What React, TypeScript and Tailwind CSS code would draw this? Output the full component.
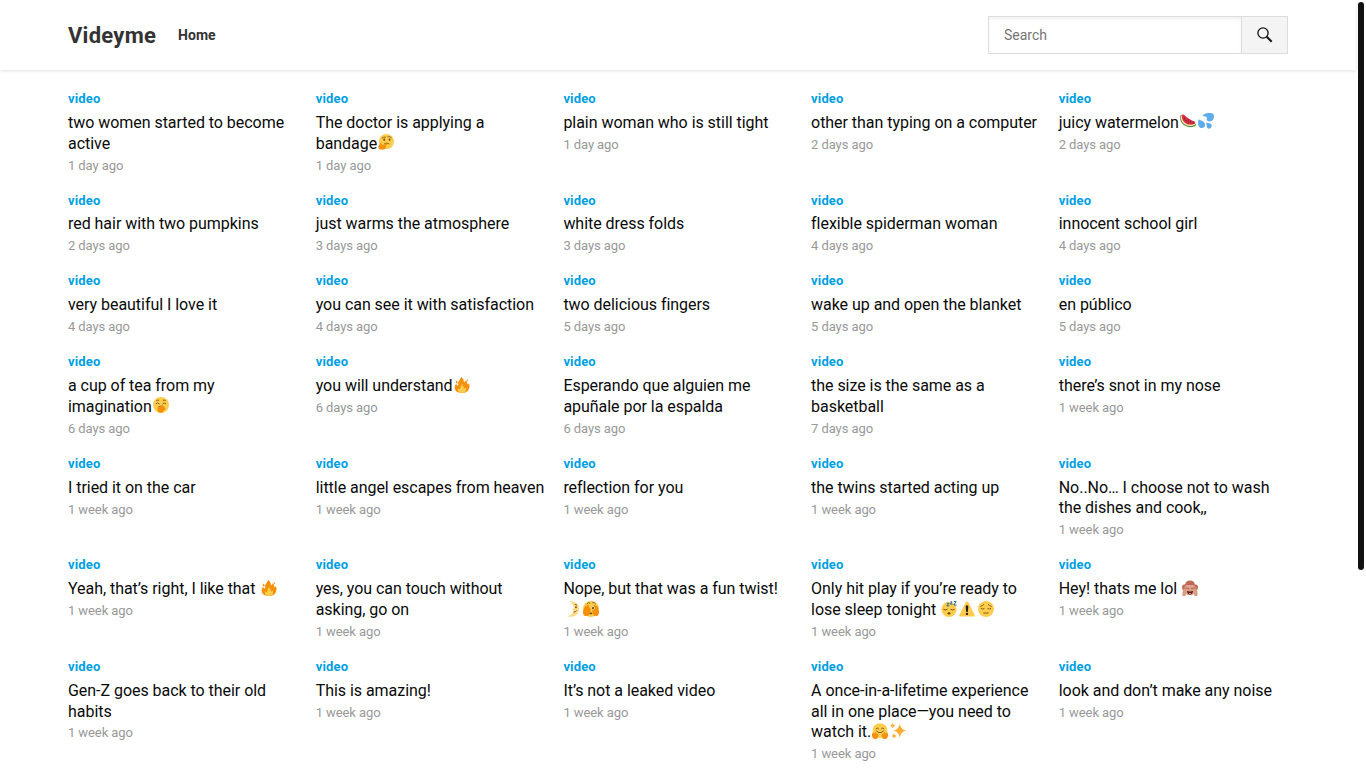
import type { ReactNode } from "react";

interface Post {
  title: string;
  age: string;
}

const rows: Post[][] = [
  [
    { title: "two women started to become active", age: "1 day ago" },
    { title: "The doctor is applying a bandage🤔", age: "1 day ago" },
    { title: "plain woman who is still tight", age: "1 day ago" },
    { title: "other than typing on a computer", age: "2 days ago" },
    { title: "juicy watermelon🍉💦", age: "2 days ago" },
  ],
  [
    { title: "red hair with two pumpkins", age: "2 days ago" },
    { title: "just warms the atmosphere", age: "3 days ago" },
    { title: "white dress folds", age: "3 days ago" },
    { title: "flexible spiderman woman", age: "4 days ago" },
    { title: "innocent school girl", age: "4 days ago" },
  ],
  [
    { title: "very beautiful I love it", age: "4 days ago" },
    { title: "you can see it with satisfaction", age: "4 days ago" },
    { title: "two delicious fingers", age: "5 days ago" },
    { title: "wake up and open the blanket", age: "5 days ago" },
    { title: "en público", age: "5 days ago" },
  ],
  [
    { title: "a cup of tea from my imagination🤭", age: "6 days ago" },
    { title: "you will understand🔥", age: "6 days ago" },
    { title: "Esperando que alguien me apuñale por la espalda", age: "6 days ago" },
    { title: "the size is the same as a basketball", age: "7 days ago" },
    { title: "there’s snot in my nose", age: "1 week ago" },
  ],
  [
    { title: "I tried it on the car", age: "1 week ago" },
    { title: "little angel escapes from heaven", age: "1 week ago" },
    { title: "reflection for you", age: "1 week ago" },
    { title: "the twins started acting up", age: "1 week ago" },
    { title: "No..No… I choose not to wash the dishes and cook,,", age: "1 week ago" },
  ],
  [
    { title: "Yeah, that’s right, I like that 🔥", age: "1 week ago" },
    { title: "yes, you can touch without asking, go on", age: "1 week ago" },
    { title: "Nope, but that was a fun twist! 🌛🫣", age: "1 week ago" },
    { title: "Only hit play if you’re ready to lose sleep tonight 😴⚠😔", age: "1 week ago" },
    { title: "Hey! thats me lol 🙈", age: "1 week ago" },
  ],
  [
    { title: "Gen-Z goes back to their old habits", age: "1 week ago" },
    { title: "This is amazing!", age: "1 week ago" },
    { title: "It’s not a leaked video", age: "1 week ago" },
    { title: "A once-in-a-lifetime experience all in one place—you need to watch it.🤗✨", age: "1 week ago" },
    { title: "look and don’t make any noise", age: "1 week ago" },
  ],
];

const face = <circle cx="18" cy="18" r="18" fill="#ffcc4d" />;

// Flat emoji drawings on a 36x36 grid
const emojis: Record<string, ReactNode> = {
  "🤔": (
    <>
      <circle cx="19" cy="17" r="17" fill="#ffcc4d" />
      <ellipse cx="14" cy="13" rx="2" ry="2.6" fill="#664500" />
      <ellipse cx="26" cy="13" rx="2" ry="2.6" fill="#664500" />
      <path d="M9 9q4-3 8-2M22 6q5-1 8 2M15 21q5-2 10 1" fill="none" stroke="#664500" strokeWidth="1.6" strokeLinecap="round" />
      <path d="M4 22q2-3 4 0v4l9-4q4-1 4 2l-5 2q4 0 2 4l-3 4q-3 2-9 1-6-1-5-7z" fill="#f4900c" />
    </>
  ),
  "🍉": (
    <>
      <path d="M1 5C-4 24 16 38 35 29l1-4L4 4z" fill="#5c913b" />
      <path d="M2 6C0 23 17 34 33 27l1-2L5 5z" fill="#ffe8b6" />
      <path d="M4 5C3 21 18 31 33 24q3-2 0-5Q21 16 9 4 5 2 4 5z" fill="#dd2e44" />
      <path d="M10 11v2m4 3v2m5-3v2m0 5v1m5-4v2m5 1v1" stroke="#292f33" strokeWidth="1.6" strokeLinecap="round" />
    </>
  ),
  "💦": (
    <>
      <path d="M10 7C15-1 27-1 33 1c4 3 4 12-1 16-6 5-15 1-12-5 1-4-4-4-10-5z" fill="#5dadec" />
      <path d="M1 14c6 3 15 5 15 13 0 6-6 8-11 6C-1 30 0 23 1 14z" fill="#5dadec" />
      <path d="M18 22c5-1 12 1 13 6 0 5-4 8-8 7-5-2-2-7-5-13z" fill="#5dadec" />
    </>
  ),
  "🤭": (
    <>
      {face}
      <path d="M7 15q3-4 7 0m8 0q3-4 7 0M8 8q3-2 5-1m10 0q2-1 5 1" fill="none" stroke="#664500" strokeWidth="1.8" strokeLinecap="round" />
      <path d="M12 22q6-3 11-1" fill="none" stroke="#664500" strokeWidth="1.5" />
      <path d="M10 24l8-4q3 0 2 2l3-2q3 0 2 3l2 1q2 3-2 6l-4 5q-7 2-10-3z" fill="#f4900c" />
    </>
  ),
  "🔥": (
    <>
      <path d="M5 16q2 5 5 2C7 10 15 6 16 0c5 3 6 7 6 10 1 3 4 1 4-3 5 4 3 9 5 10q2 0 2-4c3 5 2 11 0 15-3 6-9 8-15 8S4 34 2 27q-2-7 3-11zM5 8q5 4 2 7-5-2-2-7zm24-4q4 3 2 6-4-2-2-6z" fill="#f4900c" />
      <path d="M10 26q3 2 5-1c-1-4 1-7 4-9 0 5 5 6 3 10q3 0 4-3c3 5 1 13-8 13-8 0-11-5-8-10z" fill="#ffcc4d" />
    </>
  ),
  "🌛": (
    <>
      <path d="M12 0C25 0 34 8 34 19 33 31 19 39 6 34c9-1 15-6 16-12l-4-2 4-4C22 10 18 4 12 0z" fill="#ffd983" />
      <ellipse cx="27" cy="14" rx="1.8" ry="2.4" fill="#664500" />
      <path d="M22 25q4 1 6-3M25 8l4 1" fill="none" stroke="#664500" strokeWidth="1.8" strokeLinecap="round" />
    </>
  ),
  "🫣": (
    <>
      {face}
      <path d="M9 6q3-3 6-2m7-1q4 0 6 3" fill="none" stroke="#664500" strokeWidth="1.8" strokeLinecap="round" />
      <path d="M3 33q-5-6-2-12l3-9q3-2 4 1l1-4q3-2 4 1l1 5q4 0 3 5l-2 9q-4 7-12 4zM33 33q5-6 2-12l-2-9q-3-3-4 0l-2-3q-3-1-3 2v3q-4-1-4 2l2 13q4 7 11 4z" fill="#f4900c" />
      <circle cx="23" cy="16" r="3.4" fill="#fff" />
      <circle cx="22.5" cy="16" r="2.6" fill="#664500" />
      <ellipse cx="18" cy="28" rx="3" ry="2" fill="#664500" />
    </>
  ),
  "😴": (
    <>
      <circle cx="18" cy="19" r="17" fill="#ffcc4d" />
      <path d="M6 19q4 3 8 0m8 0q4 3 8 0" fill="none" stroke="#664500" strokeWidth="2" strokeLinecap="round" />
      <ellipse cx="18" cy="28" rx="3.5" ry="2.5" fill="#664500" />
      <path d="M13 5h5l-5 6h6M21 2h4l-4 5h5M29 1h5l-5 8h6" fill="none" stroke="#226699" strokeWidth="2.2" />
    </>
  ),
  "⚠": (
    <>
      <path d="M18 1q2 0 3 2l14 28q2 4-3 4H4q-5 0-3-4L15 3q1-2 3-2z" fill="#ffcc4d" />
      <path d="M15 11q3-3 6 0l-1 13q-2 2-4 0z" fill="#231f20" />
      <circle cx="18" cy="29" r="2.7" fill="#231f20" />
    </>
  ),
  "😔": (
    <>
      {face}
      <path d="M7 17q4 3 7 0m8 0q4 3 7 0M6 12q5-1 7-4m10 0q2 3 7 4M13 27h10" fill="none" stroke="#664500" strokeWidth="1.8" strokeLinecap="round" />
    </>
  ),
  "🙈": (
    <>
      <path d="M7 10Q9 1 18 1q9 0 11 9 7-1 7 7 0 6-5 7-2 9-13 10Q7 33 5 24q-5-1-5-7 0-8 7-7z" fill="#bf6952" />
      <path d="M6 18Q7 9 18 12q11-3 12 6l-2 11q-10 8-20 0z" fill="#e6aaaa" />
      <path d="M1 27l4-11 10-2q3 1 2 4l1 2 1-2q-1-3 2-4l10 2 4 11v9h-7l-2-11H10L8 36H1z" fill="#d99e82" />
      <path d="M5 18l11 1m15-1l-11 1" stroke="#9f5442" strokeWidth="1.5" />
      <path d="M11 25q7 2 14 0-1 8-7 8t-7-8z" fill="#662113" />
      <path d="M14 30q4-2 8 0-4 3-8 0z" fill="#e6aaaa" />
    </>
  ),
  "🤗": (
    <>
      <circle cx="18" cy="17" r="16.5" fill="#ffcc4d" />
      <path d="M9 13q3-4 6 0m6 0q3-4 6 0M10 18q8 8 16 0" fill="none" stroke="#664500" strokeWidth="1.8" strokeLinecap="round" />
      <path d="M1 22q2-2 5 2l1-3q3-1 3 3l3 1q2 4 0 8-4 5-10 2-5-5-2-13zm34 0q-2-2-5 2l-1-3q-3-1-3 3l-3 1q-2 4 0 8 4 5 10 2 5-5 2-13z" fill="#f4900c" />
    </>
  ),
  "✨": (
    <path d="M22 2q2 12 14 15-12 3-14 16-2-13-14-16Q20 14 22 2zM6 0q1 5 6 6-5 1-6 6-1-5-6-6 5-1 6-6zm3 23q1 5 6 6-5 1-6 6-1-5-6-6 5-1 6-6z" fill="#ffac33" />
  ),
};

function Title({ text }: { text: string }) {
  return (
    <h2 className="mt-[5.9px] text-base leading-[20.8px] tracking-[-0.04px] text-[#0a0a0a]">
      {text.split(/(\p{Extended_Pictographic})/u).map((part, i) =>
        emojis[part] ? (
          <svg key={i} role="img" aria-label={part} viewBox="0 0 36 36" className="mx-[1.1px] inline-block size-4 align-[-1.6px]">
            {emojis[part]}
          </svg>
        ) : (
          part
        )
      )}
    </h2>
  );
}

function Header() {
  return (
    <header className="h-[70px] w-[1356px] bg-white shadow-[0_1px_3px_rgba(0,0,0,0.12)]">
      <div className="mx-[68px] flex h-full items-center">
        <a href="#" className="text-[22px] font-bold tracking-[0.25px] text-[#333]">Videyme</a>
        <a href="#" className="ml-[22px] text-sm font-bold text-[#333]">Home</a>
        <form className="ml-auto flex h-[38px] w-[300px] border border-[#ddd]">
          <input
            type="search"
            placeholder="Search"
            className="w-[252px] px-[15px] text-sm text-[#333] shadow-[inset_0_2px_3px_rgba(0,0,0,0.06)] outline-none placeholder:text-[#757575]"
          />
          <button type="button" aria-label="Search" className="flex flex-1 items-center justify-center border-l border-[#ddd] bg-[#f4f4f4]">
            <svg viewBox="0 0 16 16" className="size-4" fill="none" stroke="#111">
              <circle cx="6" cy="6" r="5.1" strokeWidth="1.3" />
              <path d="M9.7 9.7l5 5" strokeWidth="2" />
            </svg>
          </button>
        </form>
      </div>
    </header>
  );
}

export default function App() {
  return (
    <div className="relative h-screen overflow-hidden bg-white font-['Roboto',sans-serif]">
      <Header />
      <main className="ml-[68px] pt-5">
        {rows.map((row, i) => (
          <div key={i} className="mb-[18px] grid grid-cols-[repeat(5,231px)] gap-x-[16.7px]">
            {row.map((post) => (
              <article key={post.title}>
                <div className="text-[13px] leading-[17px] font-bold tracking-[0.15px] text-[#009fe3]">video</div>
                <Title text={post.title} />
                <div className="mt-[2.1px] text-[13px] leading-[17px] tracking-[-0.08px] text-[#999]">{post.age}</div>
              </article>
            ))}
          </div>
        ))}
      </main>

      {/* Scrollbar thumb */}
      <div className="absolute top-[2px] right-[2px] h-[568px] w-[6px] rounded-[3px] bg-[#111]" />
    </div>
  );
}
